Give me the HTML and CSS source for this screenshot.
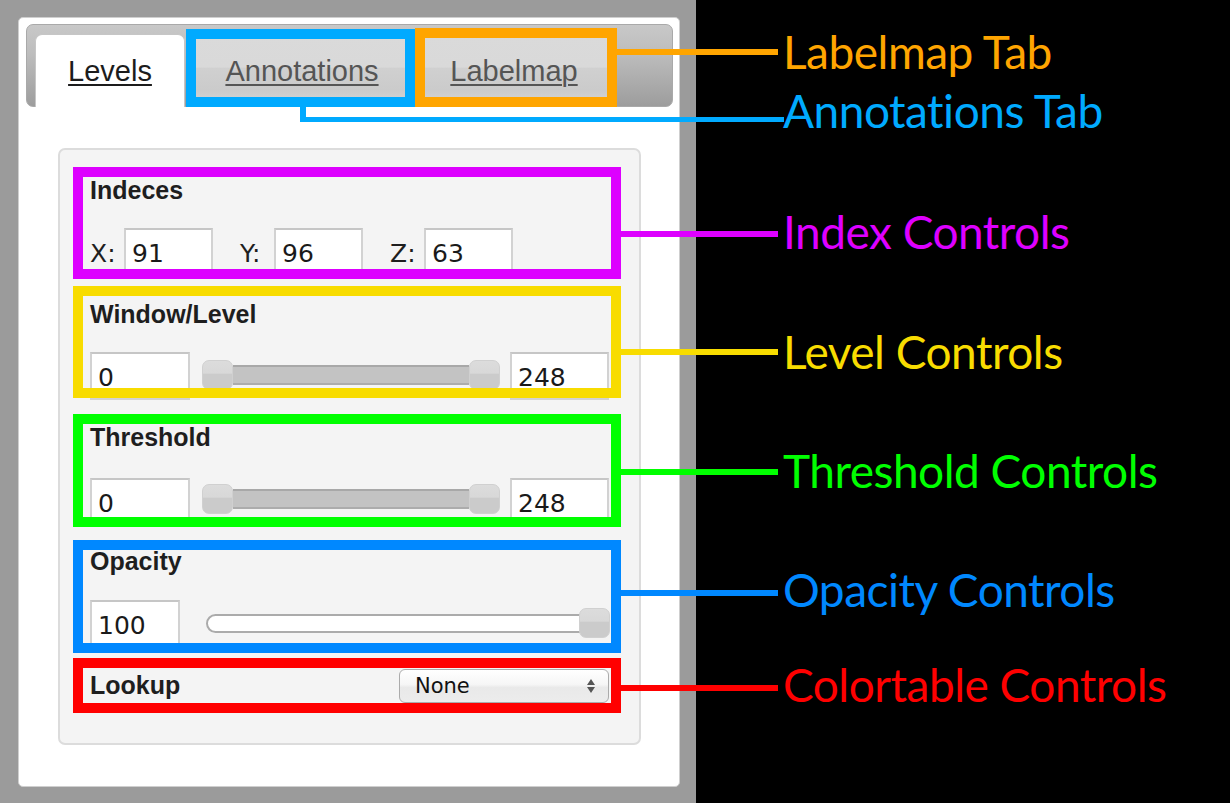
FILE: index.html
```html
<!DOCTYPE html>
<html>
<head>
<meta charset="utf-8">
<title>Levels panel</title>
<link rel="stylesheet" href="styles.css">
</head>
<body>
<div class="screen">
  <div class="stage">
    <div class="panel">
      <ul class="tabbar">
        <li class="tab tab-active"><a>Levels</a></li>
        <li class="tab tab-annot"><a>Annotations</a></li>
        <li class="tab tab-label"><a>Labelmap</a></li>
      </ul>
      <div class="controls">
        <section class="group g-index">
          <div class="glabel">Indeces</div>
          <div class="row row-index">
            <label class="axis">X:</label><input class="num num-idx" type="text" value="91">
            <label class="axis axis-gap">Y:</label><input class="num num-idx" type="text" value="96">
            <label class="axis axis-gap">Z:</label><input class="num num-idx" type="text" value="63">
          </div>
        </section>
        <section class="group g-level">
          <div class="glabel">Window/Level</div>
          <div class="row">
            <input class="num num-lo" type="text" value="0">
            <div class="range">
              <span class="handle"></span><span class="track"></span><span class="handle"></span>
            </div>
            <input class="num num-hi" type="text" value="248">
          </div>
        </section>
        <section class="group g-thresh">
          <div class="glabel">Threshold</div>
          <div class="row">
            <input class="num num-lo" type="text" value="0">
            <div class="range">
              <span class="handle"></span><span class="track"></span><span class="handle"></span>
            </div>
            <input class="num num-hi" type="text" value="248">
          </div>
        </section>
        <section class="group g-opac">
          <div class="glabel">Opacity</div>
          <div class="row">
            <input class="num num-op" type="text" value="100">
            <div class="single">
              <span class="track-white"></span><span class="handle handle-end"></span>
            </div>
          </div>
        </section>
        <section class="group g-lookup">
          <div class="glabel glabel-inline">Lookup</div>
          <div class="select">
            <span class="select-text">None</span>
            <svg class="select-arrows" width="8" height="14" viewBox="0 0 8 14"><path d="M4 0 L8 6 L0 6 Z M0 8 L8 8 L4 14 Z" fill="#555"/></svg>
          </div>
        </section>
      </div>
    </div>
  </div>
  <div class="callouts">
    <div class="callout c-labelmap">Labelmap Tab</div>
    <div class="callout c-annot">Annotations Tab</div>
    <div class="callout c-index">Index Controls</div>
    <div class="callout c-level">Level Controls</div>
    <div class="callout c-thresh">Threshold Controls</div>
    <div class="callout c-opac">Opacity Controls</div>
    <div class="callout c-lookup">Colortable Controls</div>
  </div>
</div>
</body>
</html>
```

FILE: styles.css
```css
* { box-sizing: border-box; }
html, body { margin: 0; padding: 0; }
body {
  background: #000;
  font-family: "Liberation Sans", Arial, sans-serif;
  color: #222;
}
.screen {
  display: flex;
  width: 1230px;
  height: 803px;
  overflow: hidden;
}
.stage {
  flex: none;
  width: 696px;
  height: 803px;
  background: #9b9b9b;
  padding: 17px 0 0 18px;
}
.panel {
  width: 662px;
  height: 770px;
  background: #fff;
  border: 1px solid #cfcfcf;
  border-radius: 5px;
  padding: 6px 0 0 7px;
}

/* tabs */
.tabbar {
  list-style: none;
  margin: 0;
  display: flex;
  align-items: flex-start;
  width: 647px;
  height: 83px;
  padding: 9px 0 0 8px;
  border: 1px solid #a9a9a9;
  border-radius: 7px;
  background: linear-gradient(#c8c8c8, #bdbdbd 35%, #9d9d9d);
}
.tab {
  position: relative;
  flex: none;
  height: 66px;
  padding-top: 20px;
  text-align: center;
  font-size: 29px;
  line-height: 34px;
  border-radius: 7px 7px 0 0;
}
.tab a {
  color: #555;
  text-decoration: underline;
  text-decoration-thickness: 2px;
  text-underline-offset: 3px;
}
.tab-active {
  width: 150px;
  height: 73px;
  padding-top: 19px;
  background: #fff;
  border: 1px solid #c6c6c6;
  border-bottom: 0;
}
.tab-active a { color: #1c1c1c; }
.tab-annot,
.tab-label {
  margin-left: 9px;
  background: linear-gradient(#dadada 0, #d9d9d9 50%, #d0d0d0 52%, #cbcbcb 85%, #d2d2d2 100%);
}
.tab-annot { width: 216px; }
.tab-label { width: 190px; }
.tab-annot::after,
.tab-label::after {
  content: "";
  position: absolute;
  border: 10px solid;
  pointer-events: none;
}
.tab-annot::after {
  left: -8px; right: -5px; top: -5px; bottom: -7px;
  border-color: #00aaff;
}
.tab-label::after {
  left: -4px; right: -8px; top: -6px; bottom: -7px;
  border-color: #ffa500;
}
.tab-annot::before {
  content: "";
  position: absolute;
  left: 106px;
  top: 73px;
  width: 478px;
  height: 10px;
  border-left: 6px solid #00aaff;
  border-bottom: 5px solid #00aaff;
}
.tab-label::before {
  content: "";
  position: absolute;
  left: 198px;
  top: 15px;
  width: 161px;
  height: 6px;
  background: #ffa500;
}

/* control box */
.controls {
  width: 583px;
  height: 597px;
  margin: 41px 0 0 32px;
  padding: 17px 0 0 13px;
  background: #f4f4f4;
  border: 2px solid #dcdcdc;
  border-radius: 7px;
}
.group {
  position: relative;
  width: 548px;
  padding: 0 12px 0 17px;
}
.group::after {
  content: "";
  position: absolute;
  inset: 0;
  border: 10px solid var(--c);
  pointer-events: none;
  z-index: 2;
}
.group::before {
  content: "";
  position: absolute;
  left: 100%;
  top: var(--ly);
  width: 157px;
  height: 6px;
  background: var(--c);
  z-index: 2;
}
.g-index  { --c: #dd00ff; --ly: 64px; height: 112px; padding-top: 8px; }
.g-level  { --c: #f8dc00; --ly: 63px; height: 112px; padding-top: 13px; margin-top: 7px; }
.g-thresh { --c: #00ff00; --ly: 55px; height: 113px; padding-top: 8px; margin-top: 16px; }
.g-opac   { --c: #0088ff; --ly: 50px; height: 113px; padding-top: 6px; margin-top: 13px; }
.g-lookup { --c: #ff0000; --ly: 27px; height: 55px; padding-top: 11px; margin-top: 5px;
            display: flex; align-items: flex-start; }

.glabel {
  font-weight: bold;
  font-size: 25px;
  line-height: 30px;
  color: #1e1e1e;
}
.glabel-inline { margin-top: 1px; }

.row {
  display: flex;
  align-items: flex-start;
}
.g-index .row  { margin-top: 23px; }
.g-level .row  { margin-top: 23px; }
.g-thresh .row { margin-top: 26px; }
.g-opac .row   { margin-top: 24px; }
.row-index { align-items: baseline; }

.axis {
  width: 34px;
  flex: none;
  font-family: "DejaVu Sans", sans-serif;
  font-size: 25px;
  color: #1e1e1e;
}
.axis-gap { margin-left: 27px; }

.num {
  flex: none;
  height: 48px;
  padding: 6px 6px 4px;
  margin: 0;
  border: 2px solid #d2d2d2;
  border-top-color: #c6c6c6;
  background: #fff;
  font-family: "DejaVu Sans", sans-serif;
  font-size: 25px;
  color: #1a1a1a;
  outline: none;
  border-radius: 0;
}
.num-idx { width: 89px; }
.num-lo  { width: 100px; }
.num-hi  { width: 99px; margin-left: 10px; }
.num-op  { width: 90px; }

/* dual range */
.range {
  flex: 1;
  display: flex;
  align-items: center;
  height: 30px;
  margin-left: 12px;
  margin-top: 8px;
}
.g-thresh .range { margin-top: 6px; }
.handle {
  flex: none;
  width: 31px;
  height: 30px;
  border: 1px solid #d0d0d0;
  border-radius: 7px;
  background: linear-gradient(#dcdcdc 0, #d8d8d8 44%, #cbcbcb 46%, #cbcbcb 100%);
}
.track {
  flex: 1;
  height: 20px;
  background: #c3c3c3;
  border-top: 2px solid #a8a8a8;
  border-bottom: 2px solid #acacac;
}

/* single range */
.single {
  flex: 1;
  display: flex;
  align-items: center;
  height: 30px;
  margin-left: 26px;
  margin-top: 8px;
}
.track-white {
  flex: 1;
  height: 19px;
  background: #fff;
  border: 2px solid #ababab;
  border-radius: 10px;
}
.handle-end {
  margin-left: -30px;
  margin-right: -1px;
}

/* select */
.select {
  margin-left: auto;
  width: 210px;
  height: 34px;
  display: flex;
  align-items: center;
  justify-content: space-between;
  padding: 0 13px 0 15px;
  border: 1px solid #ababab;
  border-radius: 6px;
  background: linear-gradient(#ffffff, #f6f6f6 45%, #e9e9e9 55%, #ececec);
  font-family: "DejaVu Sans", sans-serif;
  font-size: 21px;
  line-height: 32px;
  color: #111;
}
.select-arrows { flex: none; display: block; }

/* callouts */
.callouts {
  flex: 1;
  display: flex;
  flex-direction: column;
  align-items: flex-start;
  padding: 29px 0 0 87px;
  font-family: Lato, "Open Sans", sans-serif;
  font-size: 46px;
  line-height: 46px;
  letter-spacing: -0.5px;
  white-space: nowrap;
}
.c-labelmap { color: #ffa500; }
.c-annot    { color: #00aaff; margin-top: 13px; }
.c-index    { color: #dd00ff; margin-top: 75px; }
.c-level    { color: #f8dc00; margin-top: 74px; }
.c-thresh   { color: #00ff00; margin-top: 73px; }
.c-opac     { color: #0088ff; margin-top: 73px; }
.c-lookup   { color: #ff0000; margin-top: 49px; }
```
